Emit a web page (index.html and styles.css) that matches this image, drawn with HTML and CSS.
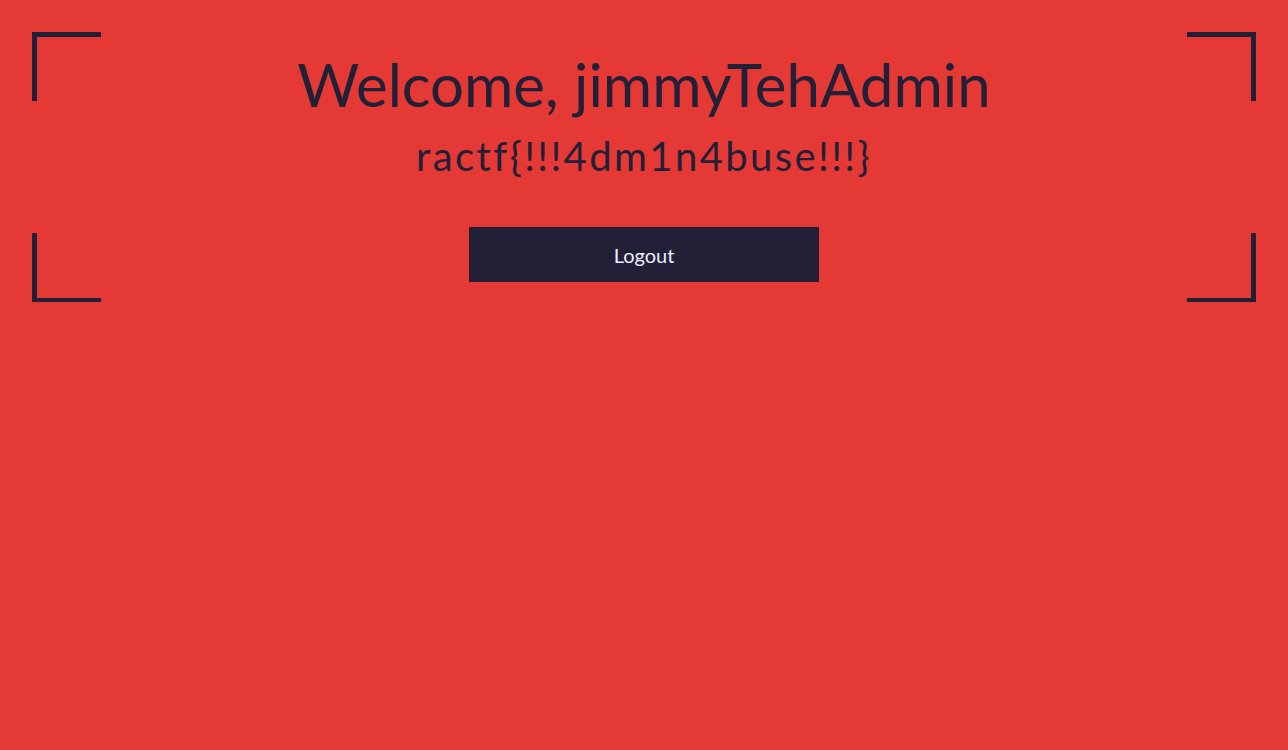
FILE: index.html
```html
<!DOCTYPE html>
<html lang="en">
<head>
<meta charset="utf-8">
<title>Welcome</title>
<link rel="stylesheet" href="styles.css">
</head>
<body>
<div class="frame">
  <span class="corner tl"></span>
  <span class="corner tr"></span>
  <span class="corner bl"></span>
  <span class="corner br"></span>
  <h1 class="title">Welcome, jimmyTehAdmin</h1>
  <h2 class="flag">ractf{!!!4dm1n4buse!!!}</h2>
  <button class="logout" type="button">Logout</button>
</div>
</body>
</html>
```
FILE: styles.css
```css
html, body {
  margin: 0;
  padding: 0;
  background: #e53935;
  height: 100%;
}
body {
  font-family: Lato, "Noto Sans", sans-serif;
  color: #222036;
  padding: 32px;
  box-sizing: border-box;
}
.frame {
  position: relative;
  height: 270px;
  display: flex;
  flex-direction: column;
  align-items: center;
}
.corner {
  position: absolute;
  width: 69px;
  height: 69px;
  border: 0 solid #222036;
  box-sizing: border-box;
}
.tl { top: 0; left: 0; border-top-width: 5px; border-left-width: 5px; }
.tr { top: 0; right: 0; border-top-width: 5px; border-right-width: 5px; }
.bl { bottom: 0; left: 0; border-bottom-width: 4px; border-left-width: 5px; }
.br { bottom: 0; right: 0; border-bottom-width: 4px; border-right-width: 5px; }
.title {
  margin: 16px 0 0;
  font-size: 60px;
  font-weight: 400;
  line-height: 72px;
}
.flag {
  margin: 12px 0 0;
  font-size: 40px;
  font-weight: 400;
  line-height: 48px;
  letter-spacing: 2.4px;
}
.logout {
  margin-top: 47px;
  width: 350px;
  height: 55px;
  padding: 0;
  border: none;
  background: #222036;
  color: #eeeeff;
  font-family: inherit;
  font-size: 20px;
}
```
